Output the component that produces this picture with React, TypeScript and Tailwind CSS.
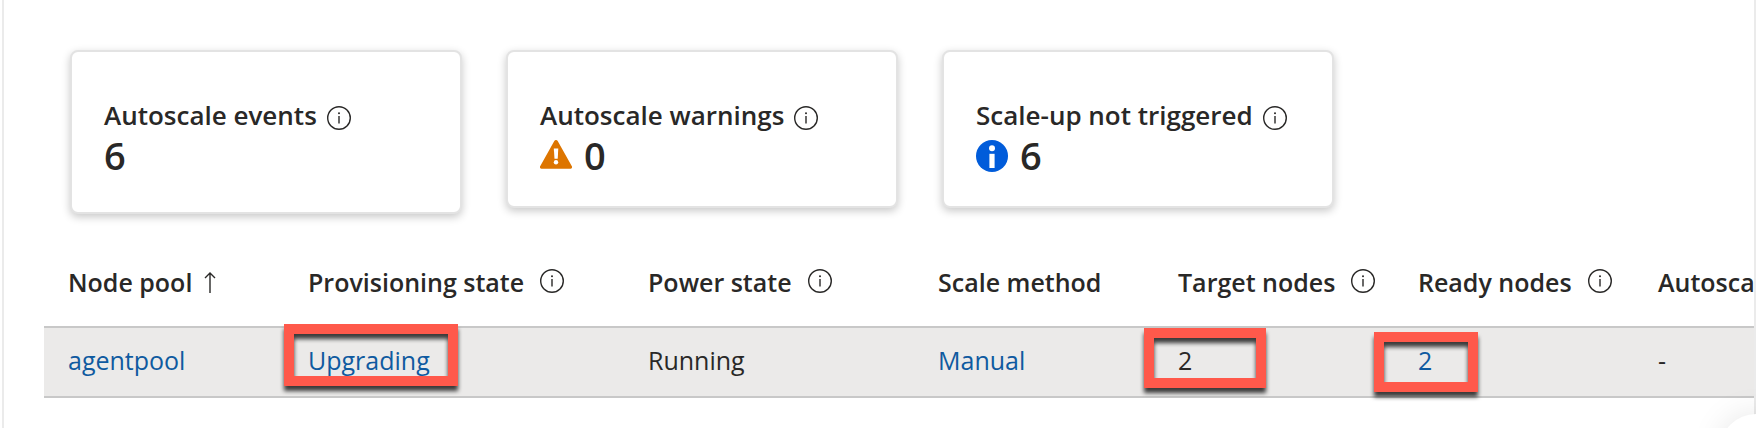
import type { ReactNode } from 'react';
import clsx from 'clsx';

function InfoIcon() {
  return (
    <svg aria-hidden="true" viewBox="0 0 24 24" className="size-6 shrink-0" fill="none">
      <circle cx="12" cy="12" r="11.3" stroke="#292827" strokeWidth="1.4" />
      <path d="M12 10v7.6" stroke="#292827" strokeWidth="1.4" />
      <circle cx="12" cy="7.2" r="1" fill="#292827" />
    </svg>
  );
}

function WarningIcon() {
  return (
    <svg aria-hidden="true" viewBox="0 0 32 32" className="size-8 shrink-0">
      <path
        d="M14.3 1.1a1.9 1.9 0 0 1 3.4 0l14 25a1.6 1.6 0 0 1-1.5 2.6H1.8a1.6 1.6 0 0 1-1.5-2.6z"
        fill="#dd7500"
      />
      <path d="M13.8 8.4h4.5l-.6 10.4h-3.2z" fill="#fff" />
      <circle cx="16" cy="22.3" r="2.2" fill="#fff" />
    </svg>
  );
}

function InfoBadgeIcon() {
  return (
    <svg aria-hidden="true" viewBox="0 0 32 32" className="size-8 shrink-0">
      <circle cx="16" cy="16" r="16" fill="#015cda" />
      <circle cx="16" cy="8.3" r="3" fill="#fff" />
      <path d="M13.4 13.8h5.2V28h-5.2z" fill="#fff" />
    </svg>
  );
}

function SortArrow() {
  return (
    <svg aria-hidden="true" viewBox="0 0 12 22" className="h-[22px] w-3 shrink-0" fill="none">
      <path d="M6 22V2M1 7l5-5 5 5" stroke="#292827" strokeWidth="1.4" />
    </svg>
  );
}

type StatCardProps = { title: string; value: number; icon?: ReactNode; tall?: boolean };

function StatCard({ title, value, icon, tall }: StatCardProps) {
  return (
    <section
      className={clsx(
        'w-[392px] shrink-0 rounded-lg border-2 border-[#e3e3e3] bg-white px-8 pt-[45px] shadow-[0_3px_8px_rgba(0,0,0,0.22)]',
        tall ? 'pb-[35px]' : 'pb-[29px]',
      )}
    >
      <div className="mb-[2px] flex items-center gap-[10px] pt-px">
        <h2 className="text-[26px] leading-[35px] font-semibold whitespace-nowrap">{title}</h2>
        <button type="button" aria-label={`About ${title}`} className="pt-1">
          <InfoIcon />
        </button>
      </div>
      <div className="flex items-center gap-3">
        {icon}
        <p className="pb-[2px] text-[38px] leading-10 font-semibold">{value}</p>
      </div>
    </section>
  );
}

/** Red frame that calls out a cell value. */
function Callout({ className }: { className: string }) {
  return (
    <span
      aria-hidden="true"
      className={clsx(
        'pointer-events-none absolute border-[10px] border-[#ff594b] drop-shadow-[0_5px_2px_rgba(0,0,0,0.75)]',
        className,
      )}
    />
  );
}

const COLUMNS = [
  { label: 'Node pool', width: 'w-[240px]', sorted: true },
  { label: 'Provisioning state', width: 'w-[340px]', info: true },
  { label: 'Power state', width: 'w-[290px]', info: true },
  { label: 'Scale method', width: 'w-[240px]' },
  { label: 'Target nodes', width: 'w-[240px]', info: true },
  { label: 'Ready nodes', width: 'w-[240px]', info: true },
  { label: 'Autosca', width: 'w-auto' },
];

const CELL = 'relative h-[72px] border-y-2 border-[#c8c8c8] bg-[#ebeae9] pb-[2px] pl-6 text-[25px]';

export default function App() {
  return (
    <div className="relative min-h-screen overflow-hidden bg-white pl-[2px] font-['Open_Sans','Noto_Sans',sans-serif] text-[#292827]">
      <main className="min-h-screen border-x-2 border-[#ebebeb] pt-[50px]">
        <div className="flex items-start gap-11 pl-[66px]">
          <StatCard title="Autoscale events" value={6} tall />
          <StatCard title="Autoscale warnings" value={0} icon={<WarningIcon />} />
          <StatCard title="Scale-up not triggered" value={6} icon={<InfoBadgeIcon />} />
        </div>

        <div className="mt-6 pl-10">
          <table className="w-full table-fixed border-separate border-spacing-0 text-left">
            <thead>
              <tr>
                {COLUMNS.map((col) => (
                  <th key={col.label} scope="col" className={clsx('h-[88px] pl-6 font-semibold', col.width)}>
                    <div className={clsx('flex items-center', col.sorted ? 'gap-3' : 'gap-4')}>
                      <span className="text-[25px] leading-9 whitespace-nowrap">{col.label}</span>
                      {col.sorted && <SortArrow />}
                      {col.info && (
                        <button type="button" aria-label={`About ${col.label}`} className="pb-[2px]">
                          <InfoIcon />
                        </button>
                      )}
                    </div>
                  </th>
                ))}
              </tr>
            </thead>
            <tbody>
              <tr>
                <td className={CELL}>
                  <a href="#agentpool" className="text-[#0f5aa0]">agentpool</a>
                </td>
                <td className={CELL}>
                  <a href="#upgrading" className="text-[#0f5aa0]">Upgrading</a>
                  <Callout className="-top-1 left-0 h-[62px] w-[174px]" />
                </td>
                <td className={CELL}>Running</td>
                <td className={CELL}>
                  <a href="#scale" className="text-[#0f5aa0]">Manual</a>
                </td>
                <td className={CELL}>
                  2
                  <Callout className="top-0 -left-[10px] h-[60px] w-[122px]" />
                </td>
                <td className={CELL}>
                  <a href="#nodes" className="text-[#0f5aa0]">2</a>
                  <Callout className="top-1 -left-5 h-[60px] w-[104px]" />
                </td>
                <td className={CELL}>-</td>
              </tr>
            </tbody>
          </table>
        </div>
      </main>

      <button
        type="button"
        aria-label="Feedback"
        className="absolute -right-9 -bottom-[58px] size-[72px] rounded-full bg-white shadow-[0_0_32px_rgba(0,0,0,0.1)]"
      />
    </div>
  );
}
